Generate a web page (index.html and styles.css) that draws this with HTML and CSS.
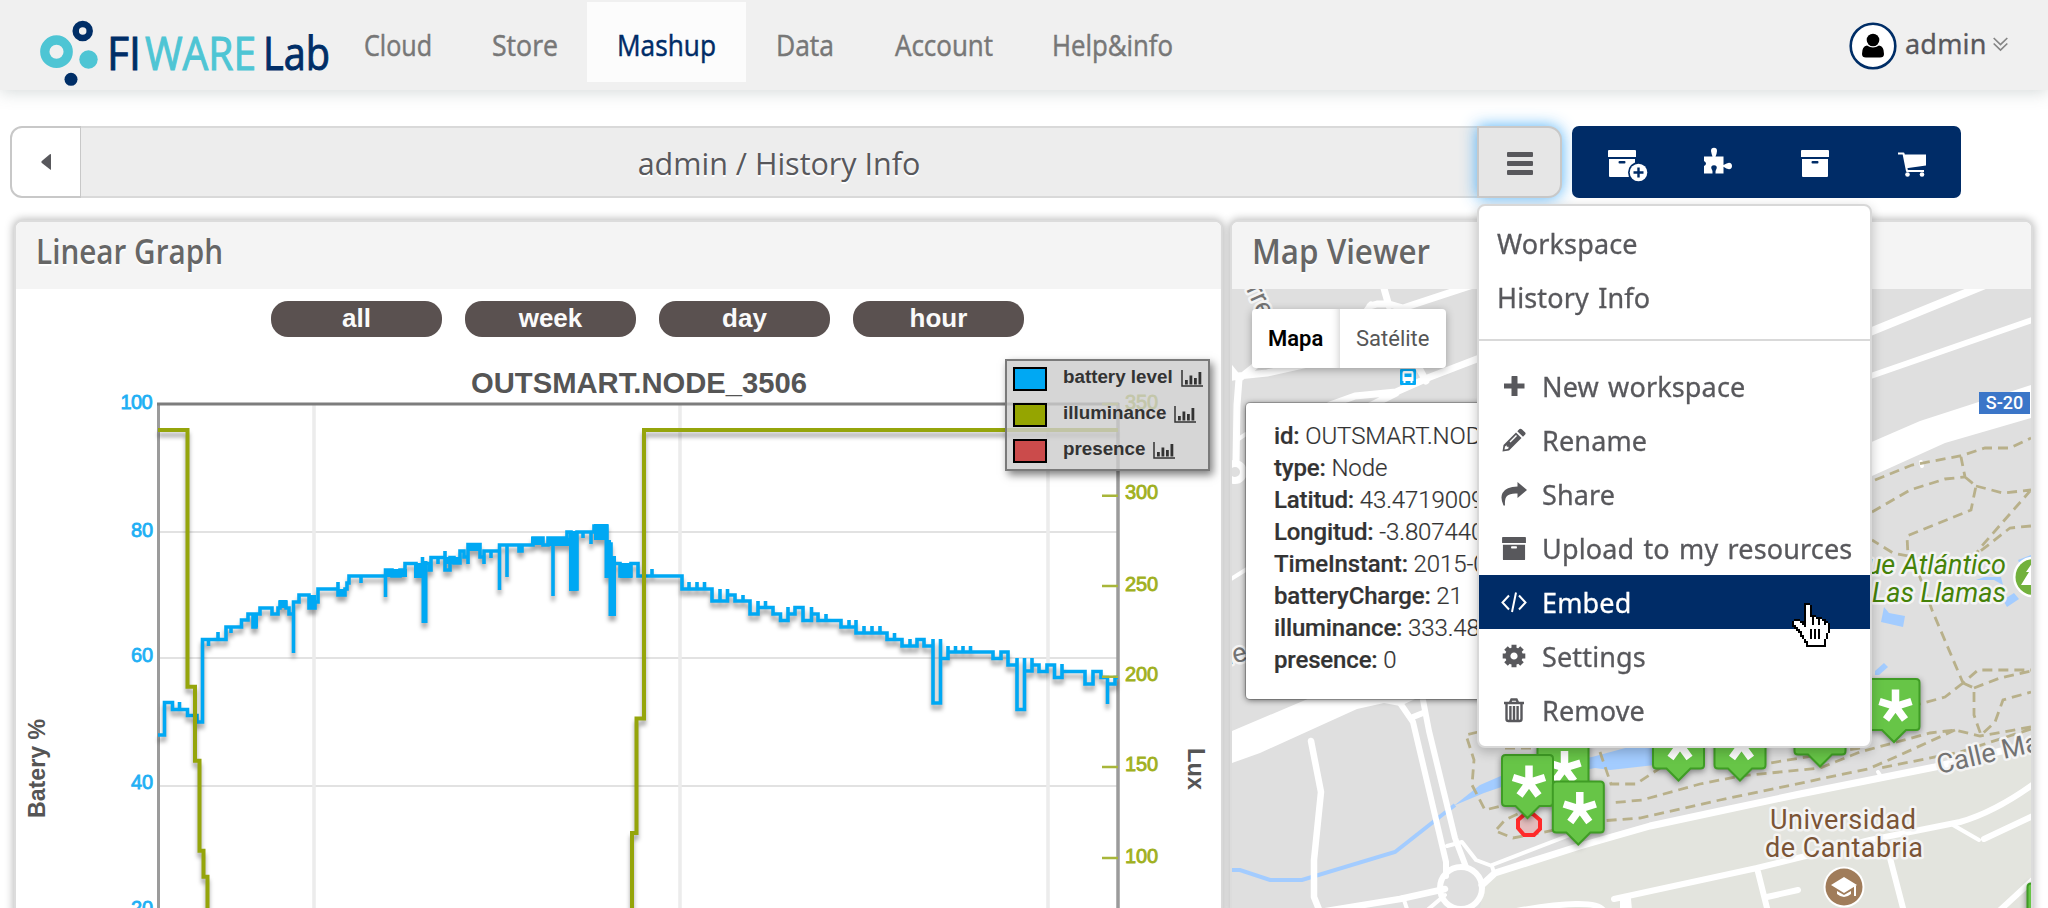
FILE: index.html
```html
<!DOCTYPE html>
<html lang="en">
<head>
<meta charset="utf-8">
<title>FIWARE Lab - Mashup</title>
<link rel="stylesheet" href="styles.css">
</head>
<body>
<svg class="defs" width="0" height="0" aria-hidden="true">
  <defs>
    <symbol id="i-archive" viewBox="0 0 28 27"><path fill="currentColor" fill-rule="evenodd" d="M1 0H27Q28 0 28 1V7H0V1Q0 0 1 0ZM1 9H27V26Q27 27 26 27H2Q1 27 1 26ZM11.500 11Q10.500 11 10.500 12.200T11.500 13.500H16.500Q17.500 13.500 17.500 12.200T16.500 11Z"/></symbol>
    <symbol id="i-bars" viewBox="0 0 22 17"><path fill="none" stroke="currentColor" stroke-width="1.500" d="M1 0V16H22"/><path fill="currentColor" d="M4 10h2.800v4.500H4zM8.500 5.500h2.800v9H8.500zM13 8h2.800v6.500H13zM17.500 2h2.800v12.500h-2.800z"/></symbol>
    <g id="pin">
      <path fill="#67c547" stroke="#3f9c25" stroke-width="2" d="M-22 -25.500H22Q25.500 -25.500 25.500 -22V22Q25.500 25.500 22 25.500H12L0 37.500L-12 25.500H-22Q-25.500 25.500 -25.500 22V-22Q-25.500 -25.500 -22 -25.500Z"/>
      <path stroke="#fff" stroke-width="7.500" d="M1.500 3V-15M1.500 2L-14.500 -3M1.500 2L17.500 -3M1.500 2L-8 15M1.500 2L11 15"/>
    </g>
  </defs>
</svg>

<header class="topbar">
  <svg class="logo" width="334" height="90" viewBox="0 0 334 90">
    <circle cx="56.500" cy="51.700" r="11.700" fill="none" stroke="#4ec5d4" stroke-width="9.300"/>
    <circle cx="82.700" cy="31" r="7" fill="none" stroke="#002e67" stroke-width="6.500"/>
    <circle cx="88.500" cy="59.500" r="9.200" fill="#4ec5d4"/>
    <circle cx="71" cy="79.300" r="6.500" fill="#002e67"/>
    <g class="logo-text">
      <text class="navy" x="107" y="69.500" textLength="34" lengthAdjust="spacingAndGlyphs">FI</text>
      <text class="teal" x="145" y="69.500" textLength="111" lengthAdjust="spacingAndGlyphs">WARE</text>
      <text class="navy" x="263" y="69.500" textLength="67" lengthAdjust="spacingAndGlyphs">Lab</text>
    </g>
  </svg>
  <nav class="nav">
    <a class="tab tab-cloud"><svg width="68" height="80"><text y="54" textLength="68" lengthAdjust="spacingAndGlyphs">Cloud</text></svg></a>
    <a class="tab tab-store"><svg width="66" height="80"><text y="54" textLength="66" lengthAdjust="spacingAndGlyphs">Store</text></svg></a>
    <a class="tab tab-mashup active"><svg width="99" height="80"><text y="54" textLength="99" lengthAdjust="spacingAndGlyphs">Mashup</text></svg></a>
    <a class="tab tab-data"><svg width="58" height="80"><text y="54" textLength="58" lengthAdjust="spacingAndGlyphs">Data</text></svg></a>
    <a class="tab tab-account"><svg width="98" height="80"><text y="54" textLength="98" lengthAdjust="spacingAndGlyphs">Account</text></svg></a>
    <a class="tab tab-help"><svg width="121" height="80"><text y="54" textLength="121" lengthAdjust="spacingAndGlyphs">Help&amp;info</text></svg></a>
  </nav>
  <div class="user">
    <svg width="48" height="48" viewBox="0 0 48 48"><circle cx="24" cy="24" r="22.300" fill="#fff" stroke="#002e67" stroke-width="2.600"/><circle cx="24" cy="18" r="6.300"/><path d="M13 32Q13 24 18 23.500Q24 27.500 30 23.500Q35 24 35 32Q35 35.500 31 35.500H17Q13 35.500 13 32Z"/></svg>
    <span class="user-name">admin</span>
    <svg class="chev" width="15" height="15" viewBox="0 0 15 15"><path d="M.7 1L7.500 7.500L14.300 1M.7 6.500L7.500 13L14.300 6.500" fill="none" stroke="#858585" stroke-width="1.700"/></svg>
  </div>
</header>

<div class="toolbar">
  <div class="back"><svg width="10" height="18" viewBox="0 0 10 18"><path d="M10 1V17L8.500 16L.5 9.700V8.300L8.500 1.500Z" fill="#58585c"/></svg></div>
  <div class="crumb"><span>admin / History Info</span></div>
  <div class="burger"><i></i><i></i><i></i></div>
  <div class="actions">
    <svg width="40" height="34" viewBox="0 0 40 34"><use href="#i-archive" x="0" y="1" width="28" height="27"/><circle cx="30.500" cy="23.500" r="10.500" fill="#002c67"/><circle cx="30.500" cy="23.500" r="8.800" fill="#fff"/><path d="M30.500 18.500V28.500M25.500 23.500H35.500" stroke="#002c67" stroke-width="2.400"/></svg>
    <svg width="28" height="28" viewBox="0 0 28 28"><path fill="#fff" d="M0 9.500H8.500Q7.500 7 7 4Q7 .8 10 .8T13 4Q12.800 7 11.500 9.500H19.500V18Q23 16 25 15.800Q28 16 28 19T25 22.200Q22.500 22 19.500 19.800V26.500H11.500Q11.300 23.500 12.600 21.500Q13.500 18.500 10 18.300Q6.500 18.500 7.400 21.500Q8.800 23.500 8.500 26.500H0V19Q2 18 2 16.500T0 14Z"/></svg>
    <svg width="28" height="27"><use href="#i-archive" width="28" height="27"/></svg>
    <svg width="29" height="25" viewBox="0 0 29 25"><path fill="none" stroke="#fff" stroke-width="2" stroke-linejoin="round" d="M0 1.500H5.500L9 19H26"/><path fill="#fff" d="M6 2.500H28V13.500L8.500 16.200Z"/><circle cx="9.500" cy="22.500" r="2.300" fill="#fff"/><circle cx="24" cy="22.500" r="2.300" fill="#fff"/></svg>
  </div>

  <div class="menu">
    <div class="item plain"><span class="t">Workspace</span></div>
    <div class="item plain"><span class="t">History Info</span></div>
    <div class="rule"></div>
    <div class="item"><svg viewBox="0 0 26 26"><path fill="currentColor" d="M11 3h5q.5 0 .5.500V10.500H23.500V15.500H16.500V23H10.500V15.500H3V10.500H10.500V3.500Z"/></svg><span class="t">New workspace</span></div>
    <div class="item"><svg viewBox="0 0 26 26"><path fill="currentColor" fill-rule="evenodd" d="M18.500 2Q19.500 1.200 20.800 2.200L24.200 5.500Q25 6.500 24.200 7.500L22 9.700L16.300 4.200ZM15 5.500L20.500 11L8 23.500L1.500 24.500L2.500 18ZM4 19.500L3.500 22.500L6.500 22L7.500 21.200V19.700H5.800V18.200ZM9.500 15.500L16 9L15 8L8.500 14.500Z"/></svg><span class="t">Rename</span></div>
    <div class="item"><svg viewBox="0 0 26 26"><path fill="currentColor" d="M16.500 1L26 9L16.500 17V12.500Q9 12 6 15Q3.500 17.500 4 24.500L2.500 24.500Q-1 17 1.500 12Q5 5.500 16.500 5.500Z"/></svg><span class="t">Share</span></div>
    <div class="item"><svg viewBox="0 0 26 26"><use href="#i-archive" x="1" y="2" width="24" height="23"/></svg><span class="t">Upload to my resources</span></div>
    <div class="item hot"><svg viewBox="0 0 26 26"><path fill="none" stroke="currentColor" stroke-width="2" d="M8 6.500L1.500 13.500L8 20.500M18 6.500L24.500 13.500L18 20.500M15 3.500L11 23"/></svg><span class="t">Embed</span></div>
    <div class="item"><svg viewBox="-13 -13 26 26"><circle r="6.200" fill="none" stroke="currentColor" stroke-width="5.200"/><path stroke="currentColor" stroke-width="5" d="M0 -7V-11.300M0 7V11.300M-7 0H-11.300M7 0H11.300M5 5L8 8M-5 -5L-8 -8M5 -5L8 -8M-5 5L-8 8"/></svg><span class="t">Settings</span></div>
    <div class="item"><svg viewBox="0 0 26 26"><path fill="none" stroke="currentColor" stroke-width="2.400" d="M3 6H23M9 5.500L10.500 2.500H15.500L17 5.500M5.500 6.500V22Q5.500 24 7.500 24H18.500Q20.500 24 20.500 22V6.500M9.400 9V23M13 9V23M16.600 9V23"/></svg><span class="t">Remove</span></div>
    <svg class="hand" width="38" height="44" viewBox="0 0 19 22" shape-rendering="crispEdges"><path fill="#000" d="M6 0H9V1H10V6H12V7H15V8H17V9H18V10H19V15H18V18H17V22H7V20H6V18H5V17H4V15H3V14H2V13H1V12H0V9H1V8H4V9H6Z"/><path fill="#fff" d="M7 1H9V7H10V11H11V7H12V8H13V11H14V8H15V9H16V11H17V10H18V15H17V18H16V21H8V19H7V18H6V16H5V14H4V13H3V12H2V11H1V9H4V10H5V11H6V12H7Z"/><path fill="#000" d="M9 13h1v5h-1zM11 13h1v5h-1zM13 13h1v5h-1z"/></svg>
  </div>
</div>

<main class="panels">
  <section class="panel panel-graph">
    <div class="panel-head"><svg width="300" height="67"><text x="20" y="42" textLength="187" lengthAdjust="spacingAndGlyphs">Linear Graph</text></svg></div>
    <div class="panel-body">
      <div class="ranges"><b>all</b><b>week</b><b>day</b><b>hour</b></div>
      <svg class="chart" width="1205" height="571" viewBox="16 337 1205 571">
        <path d="M158 532H1118M158 658H1118M158 786H1118" stroke="#e2e2e2" stroke-width="2"/>
        <path d="M314 404V908M680 404V908M1048 404V908" stroke="#ececec" stroke-width="3.500"/>
        <path d="M158.500 908V404" stroke="#9b9b9b" stroke-width="3" fill="none"/>
        <path d="M1118 403V908" stroke="#9b9b9b" stroke-width="3.500"/>
        <path d="M157 404H1119" stroke="#7d7d7d" stroke-width="3"/>
        <g class="series-blue">
          <path fill="none" stroke="#00a8f3" stroke-width="3.600" d="M158 735H164.500V702.500H172.500V709.500H179.500V702V709.500H187.500V715.500H197V722H202.500V639.500H208.500V646V639.500H218V632V639.500H226V627H231V633V627H241.500V620H248V614H253V627H256V614H260V608H272V614H278V608H280V602H286V608H289V614H293.500V653V602H299V595H309V608H315V602H318V589H338V582V595H345V589H347V583H349V576H361V583V576H385.500V597V570H392V576H400V570H405V563.500H416V576H422.500V557V563.500H429V570H431V557.500H438V564V557.500H445V551V570H450V557.500H454V563H460V551H464V557H468V564V544.500H480V557H484V564V551H491V558V551H499.500V590V545H507V577V545H519V551H522V545H533V538H543V545H548V538H553V596V538H567V532H571V589H577V532H583V538V532H591V544V532H594V526H607V544H611V560H613V563.500H620V576H631V563.500H638V576H652V569V576H682V589H689V582V589H697V582V589H704.500V582V589H712V601H720V589V601H727.500V589V595H735V601H743V595V601H750V614H758V601V614M758 607.500H765.500V601V607.500H773V614H780.500V620.500H788V607V614H795V607.500H803V620.500H811.500V607V614H818V620.500H826V614V620.500H841V627H849V620V627H856V620V633H864V626V633H872V626V633H880V626V633H887V639.500H894.500V633V639.500H902V646H910V639V646H917V639.500H924V646H933V639V703H940.500V639V658.500H948V646V652H955.500V646V652H963V646V652H970.500V646V652H993V658.500H1001V652H1008V665H1017V658V709.500H1024.500V658V671H1032V658V665H1039V671.500H1047V665H1054.500V677.500H1062V664V671.500H1085V684H1093V671.500H1101V677.500H1107.500V704V684H1115V677.500H1118"/>
          <path fill="#00a8f3" d="M252 613h6v14h-6zM279 600h8v8h-8zM309 595h7v13h-7zM339 589h7v7h-7zM385 569h22v8h-22zM414 563h8v15h-8zM421.500 561h6v62h-6zM444 557h16v7h-16zM468 544h13v7h-13zM531 537h12v8h-12zM547 538h24v8h-24zM569 531h8.500v60h-8.500zM594 524h14v16h-14zM604.500 540h6.500v38h-6.500zM608.500 556h7.500v60h-7.500zM620 563h12v15h-12z"/>
        </g>
        <g class="series-olive"><path fill="none" stroke="#95a50b" stroke-width="4" d="M158 430H187.500V686.700H195V760.700H199.500V850.700H203.500V876.700H207.500V912M632 912V833H636.500V718.500H644V430H1118"/></g>
        <path d="M1102 404H1118M1102 495.700H1118M1102 586H1118M1102 676.700H1118M1102 767H1118M1102 858H1118" stroke="#a8b63a" stroke-width="2.600"/>
        <g class="axis blue">
          <text x="120.500" y="408.500" textLength="32">100</text><text x="131" y="537" textLength="22">80</text><text x="131" y="662" textLength="22">60</text><text x="131" y="788.500" textLength="22">40</text><text x="131" y="915" textLength="22">20</text>
        </g>
        <g class="axis olive">
          <text x="1125" y="409" textLength="33">350</text><text x="1125" y="499" textLength="33">300</text><text x="1125" y="590.500" textLength="33">250</text><text x="1125" y="680.500" textLength="33">200</text><text x="1125" y="771" textLength="33">150</text><text x="1125" y="863" textLength="33">100</text>
        </g>
        <g class="chart-text">
          <text x="471" y="392.500" class="chart-title" textLength="336" lengthAdjust="spacingAndGlyphs">OUTSMART.NODE_3506</text>
          <text transform="translate(45 818) rotate(-90)" textLength="99" lengthAdjust="spacingAndGlyphs">Batery %</text>
          <text transform="translate(1187.500 748) rotate(90)" textLength="42" lengthAdjust="spacingAndGlyphs">Lux</text>
        </g>
      </svg>
      <div class="legend">
        <div><i class="sw sw-blue"></i><span>battery level</span><svg width="22" height="17"><use href="#i-bars" width="22" height="17"/></svg></div>
        <div><i class="sw sw-olive"></i><span>illuminance</span><svg width="22" height="17"><use href="#i-bars" width="22" height="17"/></svg></div>
        <div><i class="sw sw-red"></i><span>presence</span><svg width="22" height="17"><use href="#i-bars" width="22" height="17"/></svg></div>
      </div>
    </div>
  </section>

  <section class="panel panel-map">
    <div class="panel-head"><svg width="300" height="67"><text x="20" y="42" textLength="178" lengthAdjust="spacingAndGlyphs">Map Viewer</text></svg></div>
    <div class="panel-body">
      <svg class="map" width="799" height="619" viewBox="1232 289 799 619">
        <rect x="1232" y="289" width="799" height="619" fill="#dfdfdf"/>
        <path fill="#e3e4de" d="M1480 908L1484 885L1495 875L1580 845L1650 825L1935 767L2031 745V908Z"/>
        <path fill="none" stroke="#a3ccff" stroke-width="4" d="M1232 870H1240L1270 880H1302L1395 852L1442 815L1455 805"/>
        <path fill="#a3ccff" d="M1451 808L1480 785L1510 772L1592 757L1655 740V765L1610 770L1595 768L1510 784L1484 793L1453 806Z"/>
        <path fill="#a3ccff" d="M1884 607L1889 613L1905 616L1903 627L1881 622ZM2003 600L2014 593L2019 599L2007 607ZM1984 577H2001L2003 585L1994 580L1976 580ZM2018 560L2031 555V561L2020 565ZM1875 671L1884 663L1888 667L1879 675H1875Z"/>
        <path fill="#fff" d="M1232 731L1310 698L1480 625L1860 447L1920 421L2031 385V418L1945 443L1872 476L1500 660L1400 706L1384 703L1357 709L1260 753L1232 763Z"/>
        <g fill="none" stroke="#fff" stroke-width="7" stroke-linecap="round" stroke-linejoin="round">
          <path d="M1383 285L1389 306M1370 306L1377 304H1389L1403 308L1482 282M1366 312L1371 305M1228 378L1238 376L1267 373L1330 359M1230 368L1239 379L1237 405L1236 462M1240 378L1260 362"/>
          <circle cx="1235" cy="472" r="8.500"/>
          <path d="M1330 405L1355 396L1396 392L1430 377L1490 354M1370 406L1396 393M1419 368L1426 381"/>
          <path d="M1228 581L1247 569M1237 440L1246 434" stroke-width="4"/>
          <path d="M1311 741L1321 792L1314 860V897L1320 912L1400 899L1445 889" stroke-width="6.500"/>
          <path d="M1400 703L1413 722L1446 862V876M1423 700L1429 731L1455 838L1466 867M1413 717L1423 713" stroke-width="6"/>
          <circle cx="1461" cy="888" r="21" stroke-width="6"/>
          <path d="M1447 846L1462 842L1476 860L1492 866L1494 873M1492 865L1575 833L1600 826M1403 897L1408 912M1445 895L1425 912" stroke-width="4"/>
          <path d="M1482 885L1495 873L1580 846L1650 826L1720 811L1800 794L1935 767L2035 743" stroke-width="7"/>
          <path d="M1878 772L1882 778" stroke-width="4"/>
          <path d="M1614 899L1757 868L1870 840L1960 822Q1995 812 2035 783M1757 868L1768 912M1767 897L1798 890M1890 858L1904 912M1984 839L2035 815M1998 912L2035 878M1628 899L1629 910M1500 914Q1600 895 1604 912M1623 900V912" stroke-width="6"/>
          <path d="M1953 825L1979 840" stroke-width="4"/>
          <path d="M1865 378L2035 319" stroke-width="6"/><path d="M1865 334L1985 285" stroke-width="8"/><path d="M1921 462L1922 466" stroke-width="4"/>
        </g>
        <g fill="none" stroke="#b8b08a" stroke-width="2.800" stroke-dasharray="10 6">
          <path d="M1875 480L1912 465L1960 456L1985 448H2010L2031 438M1872 512L1910 490L1945 479L1965 477L1961 457M1965 477L1976 486L1971 510L1907 536L1908 556L1893 553L1872 540M1976 486L2003 493L2031 490M2031 490L1980 548L1970 562M2031 526L2010 528L1978 553M1918 572L1932 610L1963 683L1978 670H2031M1963 683L1945 697L1920 704M1963 683L1974 688V715L1981 735L1995 722L2003 700L2031 692M1974 688L2000 678L2031 671"/>
          <path d="M2031 727L1980 736L1955 730L1930 733L1860 752L1820 768L1740 776L1700 784L1642 800L1610 803M1955 730L1900 755L1868 769L1720 800L1640 818L1600 821M2031 729L1960 752L1880 768M1860 748L1740 768M1600 752L1611 784H1636L1660 768M1478 732L1466 735L1474 760L1472 785L1485 810L1505 805M1497 829L1505 820L1530 808L1560 800M1498 832L1513 838L1550 831L1580 822M1505 748H1540"/>
        </g>
        <g class="map-text">
          <text class="park" x="2006" y="574" text-anchor="end">ue Atlántico</text>
          <text class="park" x="2006" y="602" text-anchor="end">Las Llamas</text>
          <text class="road" transform="translate(1939 774) rotate(-13)">Calle Manuel</text>
          <text class="road" transform="translate(1246 289) rotate(66)">rre</text>
          <text class="road" transform="translate(1228 665) rotate(-14)">le</text>
          <text class="uni" x="1770" y="829" textLength="146">Universidad</text>
          <text class="uni" x="1765" y="857" textLength="158">de Cantabria</text>
        </g>
        <circle cx="2033.500" cy="577" r="20.500" fill="#fff"/><circle cx="2033.500" cy="577" r="18" fill="#72b13c"/><path fill="#fff" d="M2033 562L2026 572H2029L2021 585H2040V562Z"/>
        <rect x="1979" y="392" width="51" height="22" fill="#3b76c8"/><text class="badge" x="2004.500" y="409" text-anchor="middle">S-20</text>
        <circle cx="1844" cy="887" r="20.500" fill="#fff"/><circle cx="1844" cy="887" r="18.500" fill="#a07c5a"/>
        <path fill="#fff" d="M1831 885L1844 877L1857 885L1844 893ZM1837 891L1844 895L1851 891V894Q1844 900 1837 894ZM1854 886H1856V896H1854Z"/>
        <rect x="1400" y="369" width="16" height="16" rx="1" fill="#03a9f4"/><path fill="#fff" fill-rule="evenodd" d="M1404 371H1412Q1413.500 371 1413.500 373V381H1412.500V383H1410.500V381H1405.500V383H1403.500V381H1402.500V373Q1402.500 371 1404 371ZM1404.500 373.500V377H1411.500V373.500Z"/>
        <path d="M1525 814H1533L1540 820V829L1534 835H1524L1518 828V820Z" fill="#e3bcbc" stroke="#ff2a2a" stroke-width="4"/>
        <g class="pins">
          <use href="#pin" x="1563" y="766"/><use href="#pin" x="1527.500" y="780.500"/><use href="#pin" x="1578.300" y="807"/>
          <use href="#pin" x="1678.500" y="743"/><use href="#pin" x="1740" y="743"/><use href="#pin" x="1820" y="729"/><use href="#pin" x="1894" y="704.500"/><use href="#pin" x="2053" y="909"/>
        </g>
      </svg>
      <div class="maptype"><b>Mapa</b><span>Satélite</span></div>
      <div class="info">
        <p><b>id:</b> OUTSMART.NOD</p>
        <p><b>type:</b> Node</p>
        <p><b>Latitud:</b> 43.4719009</p>
        <p><b>Longitud:</b> -3.807440</p>
        <p><b>TimeInstant:</b> 2015-0</p>
        <p><b>batteryCharge:</b> 21</p>
        <p><b>illuminance:</b> 333.48</p>
        <p><b>presence:</b> 0</p>
      </div>
    </div>
  </section>
</main>
</body>
</html>
```
FILE: styles.css
```css
* { box-sizing: border-box; }
body { margin: 0; width: 2048px; height: 908px; overflow: hidden; background: #fff; color: #58585c; font-family: "Open Sans", sans-serif; }
svg { display: block; flex: none; }
.defs { position: absolute; }

.topbar { height: 90px; display: flex; background: #f0f0f0; box-shadow: 0 2px 16px rgba(90, 110, 110, .26); }
.logo-text { font: 400 46px "Open Sans", sans-serif; stroke-width: 1px; }
.navy { fill: #002e67; stroke: #002e67; }
.teal { fill: #4ec5d4; stroke: #4ec5d4; }
.nav { display: flex; padding-top: 2px; }
.tab { height: 80px; display: flex; justify-content: center; fill: #777; stroke: #777; stroke-width: .5px; }
.tab svg { overflow: visible; }
.tab text { font: 400 30px "Open Sans", sans-serif; }
.tab-cloud { width: 128px; }
.tab-store { width: 125px; }
.tab-mashup { width: 159px; }
.tab-data { width: 118px; }
.tab-account { width: 160px; }
.tab-help { width: 177px; }
.tab.active { background: #fcfcfc; fill: #002c67; stroke: #002c67; }
.user { margin-left: auto; padding: 22px 40px 0 0; display: flex; }
.user-name { font: 400 27px/48px "Noto Sans", sans-serif; width: 80px; margin: -2px 8px 0 8px; letter-spacing: .2px; -webkit-text-stroke: .3px; }
.chev { margin-top: 15px; }

.toolbar { position: relative; z-index: 3; display: flex; height: 72px; margin: 36px 0 22px 10px; }
.back { width: 71px; border: 2px solid #c8c8c8; border-right-width: 1px; border-radius: 12px 0 0 12px; background: #fff; display: flex; align-items: center; padding-left: 29px; }
.crumb { width: 1396px; background: #ededed; border: solid #d9d9d9; border-width: 2px 0; text-align: center; font-size: 30.500px; line-height: 70px; text-shadow: 0 2px 0 #fff; }
.burger { width: 85px; border: 2px solid #c8c8c8; border-radius: 0 14px 14px 0; background: #e6e6e6; box-shadow: 0 0 16px rgba(62, 168, 246, .9); display: flex; flex-direction: column; align-items: center; justify-content: center; gap: 4px; padding-top: 2px; }
.burger i { width: 26px; height: 5px; border-radius: 1px; background: #58585c; }
.actions { width: 389px; margin-left: 10px; background: #002c67; border-radius: 7px; color: #fff; display: flex; align-items: flex-start; padding: 23px 0 0 36px; }
.actions svg:nth-child(2) { margin: -2px 0 0 56px; }
.actions svg:nth-child(3) { margin: 1px 0 0 69px; }
.actions svg:nth-child(4) { margin: 3px 0 0 69px; }

.menu { position: absolute; left: 1467px; top: 78px; width: 395px; height: 544px; background: #fff; border: 2px solid #d8d8d8; border-radius: 8px; padding-top: 10px; box-shadow: 0 4px 12px rgba(0, 0, 0, .22); font: 400 27px/54px "Noto Sans", sans-serif; }
.item { height: 54px; display: flex; align-items: center; padding-left: 22px; gap: 15px; white-space: nowrap; }
.item.plain { padding-left: 18px; }
.item svg { width: 26px; height: 26px; }
.item .t { letter-spacing: .15px; word-spacing: 2px; padding-top: 2px; -webkit-text-stroke: .3px; }
.item.hot { background: #002c67; color: #fff; }
.rule { height: 2px; margin: 15px 0 18px; background: #d9d9d9; }
.menu .hand { position: absolute; left: 313px; top: 397px; }

.panels { display: flex; gap: 7px; padding-left: 14px; }
.panel { height: 700px; border: 2px solid #dcdcdc; border-radius: 8px; background: #fff; box-shadow: 0 0 8px 1px rgba(0, 0, 0, .28); }
.panel-graph { width: 1209px; }
.panel-map { width: 803px; }
.panel-head { height: 67px; background: #f4f4f4; border-radius: 6px 6px 0 0; }
.panel-head text { font: 600 34px "Open Sans", sans-serif; fill: #666; text-shadow: 0 2px 1px #fff; }
.panel-body { position: relative; height: 619px; overflow: hidden; }
.ranges { display: flex; gap: 23px; padding: 12px 0 0 255px; height: 48px; }
.ranges b { width: 171px; height: 36px; border-radius: 17px; background: #5a5150; color: #fafafa; font: bold 26px/34px "Liberation Sans", sans-serif; text-align: center; }
.series-blue, .series-olive { filter: drop-shadow(0 5px 2px rgba(0, 0, 0, .35)); }
.axis { font: 400 20px "Liberation Sans", sans-serif; stroke-width: .8px; }
.axis.blue { fill: #1fb0f4; stroke: #1fb0f4; }
.axis.olive { fill: #a0b020; stroke: #a0b020; }
.chart-text { font: bold 24px "Liberation Sans", sans-serif; fill: #555; }
.chart-title { font-size: 30px; }
.legend { position: absolute; left: 989px; top: 70px; width: 205px; height: 112px; padding: 6px; border: 2px solid #7a7a7a; background: rgba(204, 204, 204, .8); box-shadow: 3px 4px 8px rgba(0, 0, 0, .5); font: bold 18.800px/24px "Liberation Sans", sans-serif; color: #333; display: grid; gap: 12px; }
.legend div { display: flex; height: 24px; white-space: nowrap; }
.legend span { margin: -2px 8px 0 16px; }
.legend svg { margin-top: 3px; }
.sw { width: 34px; flex: none; border: 2px solid #000; }
.sw-blue { background: #00a8f3; }
.sw-olive { background: #95a500; }
.sw-red { background: #cb4b4b; }

.map-text { font: 400 27px Roboto, sans-serif; paint-order: stroke; stroke: #f4f4f4; stroke-width: 5px; stroke-linejoin: round; }
.park { fill: #458208; font-style: italic; }
.road { fill: #737373; }
.uni { fill: #7b5436; }
.badge { font: 500 18px Roboto, sans-serif; fill: #fff; }
.pins { filter: drop-shadow(0 2px 3px rgba(0, 0, 0, .45)); }
.maptype { position: absolute; left: 20px; top: 20px; display: flex; height: 59px; background: #fff; border-radius: 4px; box-shadow: 0 2px 8px rgba(0, 0, 0, .3); font: 400 22px/60px Roboto, sans-serif; color: #565656; }
.maptype b { width: 88px; padding-left: 16px; font-weight: 600; color: #000; box-shadow: inset -8px 0 8px -8px rgba(0, 0, 0, .25); }
.maptype span { width: 106px; padding-left: 16px; }
.info { position: absolute; left: 14px; top: 114px; width: 300px; height: 296px; background: #fff; border-radius: 4px; box-shadow: 0 1px 6px rgba(0, 0, 0, .6), 0 0 0 1px rgba(0, 0, 0, .2); padding: 17px 0 0 28px; font: 300 24px/32px Roboto, sans-serif; color: #333; white-space: nowrap; }
.info p { margin: 0; letter-spacing: -.1px; -webkit-text-stroke: .2px; }
.info b { font-weight: 500; letter-spacing: -.15px; }
```
